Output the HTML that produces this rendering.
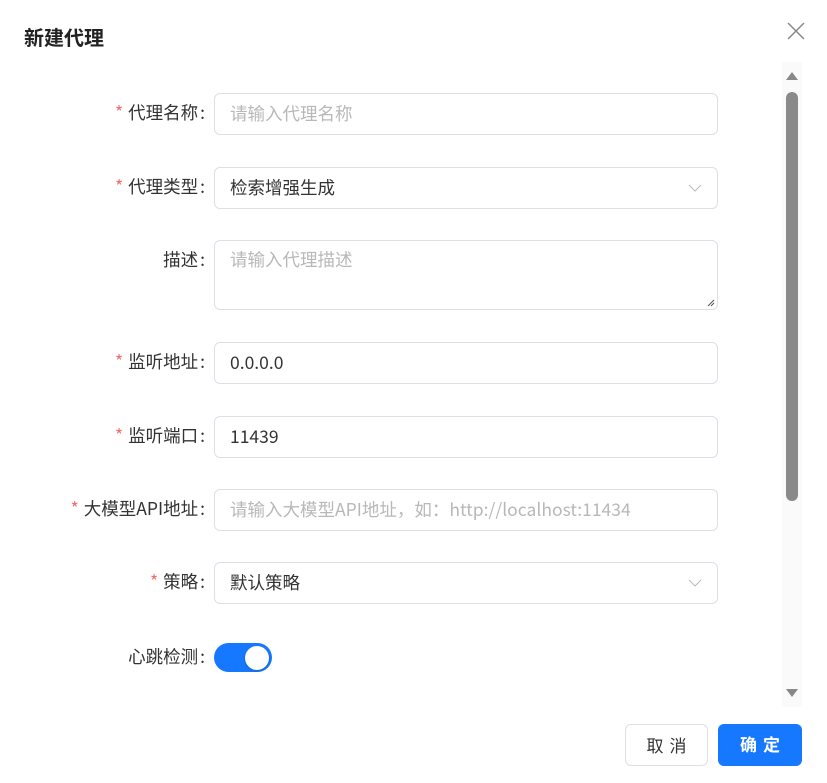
<!DOCTYPE html>
<html><head><meta charset="utf-8"><style>
*{box-sizing:border-box;margin:0;padding:0}
body{width:827px;height:783px;background:#fff;font-family:"Noto Sans CJK SC","Liberation Sans",sans-serif;color:#333;position:relative;overflow:hidden}
.title{position:absolute;left:24px;top:22px;font-size:20px;font-weight:bold;color:#222;line-height:30px}
.close{position:absolute;left:786px;top:21px}
.lbl{position:absolute;right:622px;font-size:17.5px;color:#333;white-space:nowrap;height:42px;line-height:40px}
.lbl i{color:#f56c6c;font-style:normal;margin-right:5px}
.lbl b{font-weight:normal;margin-left:2px}
.inp{position:absolute;left:214px;width:504px;height:42px;border:1px solid #dcdfe6;border-radius:6px;font-size:17.5px;line-height:40px;padding-left:15px;color:#333}
.ph{color:#b8b8b8}
.arrow{position:absolute;right:15px;top:15px}
.track{position:absolute;left:782px;top:62px;width:20px;height:645px;background:#fafafa}
.thumb{position:absolute;left:786px;top:92px;width:12px;height:409px;background:#8a8a8a;border-radius:6px}
.btn{position:absolute;top:724px;height:42px;border-radius:6px;font-size:17px;line-height:40px;text-align:center;letter-spacing:6px;padding-left:6px}
</style></head><body>
<div class="title">新建代理</div>
<svg class="close" width="20" height="20" viewBox="0 0 20 20"><path d="M2 2L18 18M18 2L2 18" stroke="#888" stroke-width="1.5"/></svg>
<div class="track"></div>
<div class="thumb"></div>
<svg style="position:absolute;left:785px;top:71px" width="14" height="10"><path d="M1 9L7 1L13 9Z" fill="#888"/></svg>
<svg style="position:absolute;left:785px;top:688px" width="14" height="10"><path d="M1 1L7 9L13 1Z" fill="#888"/></svg>

<div class="lbl" style="top:93px"><i>*</i>代理名称<b>:</b></div>
<div class="inp" style="top:93px"><span class="ph">请输入代理名称</span></div>

<div class="lbl" style="top:167px"><i>*</i>代理类型<b>:</b></div>
<div class="inp" style="top:167px">检索增强生成<svg class="arrow" width="14" height="10"><path d="M1 2L7 8L13 2" stroke="#bbb" fill="none"/></svg></div>

<div class="lbl" style="top:240px">描述<b>:</b></div>
<div class="inp" style="top:240px;height:70px;line-height:24px;padding-top:7px"><span class="ph">请输入代理描述</span>
<svg style="position:absolute;right:2px;bottom:2px" width="8" height="8"><path d="M7 1L1 7M7 4L4 7" stroke="#555"/></svg></div>

<div class="lbl" style="top:342px"><i>*</i>监听地址<b>:</b></div>
<div class="inp" style="top:342px">0.0.0.0</div>

<div class="lbl" style="top:416px"><i>*</i>监听端口<b>:</b></div>
<div class="inp" style="top:416px">11439</div>

<div class="lbl" style="top:489px"><i>*</i>大模型API地址<b>:</b></div>
<div class="inp" style="top:489px"><span class="ph">请输入大模型API地址，如：http://localhost:11434</span></div>

<div class="lbl" style="top:562px"><i>*</i>策略<b>:</b></div>
<div class="inp" style="top:562px">默认策略<svg class="arrow" width="14" height="10"><path d="M1 2L7 8L13 2" stroke="#bbb" fill="none"/></svg></div>

<div class="lbl" style="top:637px">心跳检测<b>:</b></div>
<div style="position:absolute;left:214px;top:643px;width:58px;height:29px;border-radius:15px;background:#1677ff"></div>
<div style="position:absolute;left:245px;top:646px;width:24px;height:24px;border-radius:12px;background:#fff;box-shadow:0 1px 2px rgba(0,0,0,.2)"></div>

<div class="btn" style="left:625px;width:83px;border:1px solid #dcdfe6;color:#333">取消</div>
<div class="btn" style="left:718px;width:84px;background:#1677ff;color:#fff;font-weight:bold">确定</div>
</body></html>
